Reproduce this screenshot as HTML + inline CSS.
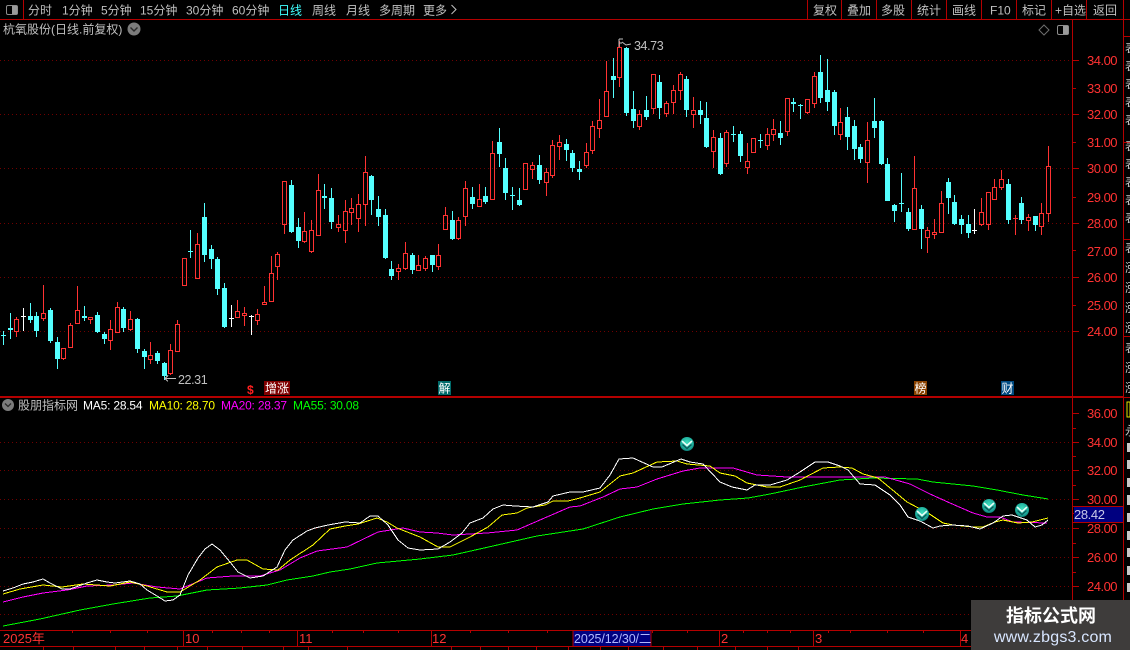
<!DOCTYPE html>
<html lang="zh">
<head>
<meta charset="utf-8">
<title>杭氧股份</title>
<style>
html,body{margin:0;padding:0;background:#000;width:1130px;height:650px;overflow:hidden}
svg{display:block}
text{font-family:"Liberation Sans","WenQuanYi Zen Hei","Noto Sans CJK SC",sans-serif}
.t{font-size:12px;fill:#c0c0c0}
.a{font-size:13px;fill:#ff3232;letter-spacing:-.5px}
.b{font-size:13px;fill:#ff3232}
.m{font-size:12px;letter-spacing:-.2px}
.e{font-size:12px;fill:#fff}
</style>
</head>
<body>
<svg xmlns="http://www.w3.org/2000/svg" width="1130" height="650" viewBox="0 0 1130 650">
<defs>
<radialGradient id="g" cx="50%" cy="40%" r="60%"><stop offset="0" stop-color="#3fe0c0"/><stop offset=".7" stop-color="#1fae9c"/><stop offset="1" stop-color="#0c7f78"/></radialGradient>
<g id="bal"><circle r="7" fill="url(#g)"/><path d="M-4.5 0.5L0 4.5L4.5 0.5" fill="none" stroke="#0b5a5a" stroke-width="1.5"/><path d="M-5 -3L0 1.5L5 -3" fill="none" stroke="#e8fff8" stroke-width="1.6"/></g>
</defs>
<rect width="1130" height="650" fill="#000"/>

<!-- frame lines -->
<g shape-rendering="crispEdges" stroke="#b40000" fill="none">
<path d="M0 19.5H1130M23.5 0V19M807.5 0V19M841.5 0V19M876.5 0V19M911.5 0V19M946.5 0V19M981.5 0V19M1016.5 0V19M1051.5 0V19M1086.5 0V19M1123.5 0V650M1072.5 19V630M0 396.5H1123" stroke-width="1"/>
<path d="M0 397.5H1123M0 630.5H971M0 646.5H971M1123 36.5H1130M1123 142.5H1130M1123 239.5H1130M1123 336.5H1130M1123 397.5H1130" />
<path d="M183.5 630V646M297.5 630V646M431.5 630V646M719.5 630V646M813.5 630V646M960.5 630V646"/>
<path d="M72.5 630V633M110.5 630V633M147.5 630V633M212.5 630V633M241.5 630V633M269.5 630V633M332.5 630V633M363.5 630V633M398.5 630V633M470.5 630V633M508.5 630V633M547.5 630V633M652.5 630V633M687.5 630V633M743.5 630V633M767.5 630V633M790.5 630V633M828.5 630V633M850.5 630V633M887.5 630V633M923.5 630V633"/>
<path d="M43.5 647V650M73.5 647V650M115.5 647V650M144.5 647V650M177.5 647V650M207.5 647V650M242.5 647V650M283.5 647V650M308.5 647V650M347.5 647V650M451.5 647V650M480.5 647V650M508.5 647V650M536.5 647V650M568.5 647V650M600.5 647V650M628.5 647V650M663.5 647V650M697.5 647V650M735.5 647V650M767.5 647V650M798.5 647V650"/>
<path d="M1073 60.5H1079M1073 88.5H1076M1073 114.5H1079M1073 142.5H1076M1073 168.5H1079M1073 197.5H1076M1073 223.5H1079M1073 250.5H1076M1073 277.5H1079M1073 305.5H1076M1073 331.5H1079"/>
<path d="M1073 413.5H1079M1073 428.5H1076M1073 442.5H1079M1073 456.5H1076M1073 470.5H1079M1073 485.5H1076M1073 499.5H1079M1073 513.5H1076M1073 528.5H1079M1073 543.5H1076M1073 557.5H1079M1073 572.5H1076M1073 586.5H1079M1073 601.5H1076"/>
</g>

<!-- dotted grid -->
<path shape-rendering="crispEdges" d="M0 60.5H1072M0 114.5H1072M0 168.5H1072M0 223.5H1072M0 277.5H1072M0 331.5H1072M0 442.5H1072M0 470.5H1072M0 499.5H1072M0 528.5H1072M0 557.5H1072M0 586.5H1072M0 614.5H1072" stroke="#700000" stroke-dasharray="1 3" fill="none"/>

<!-- toolbar -->
<rect x="6.5" y="5.5" width="11" height="9" rx="1.5" fill="none" stroke="#8c8c8c"/><rect x="12" y="6" width="5" height="8" fill="#9a9a9a"/>
<text class="t" x="28" y="14.5">分时</text>
<text class="t" x="62" y="14.5">1分钟</text>
<text class="t" x="101" y="14.5">5分钟</text>
<text class="t" x="140" y="14.5">15分钟</text>
<text class="t" x="186" y="14.5">30分钟</text>
<text class="t" x="232" y="14.5">60分钟</text>
<text class="t" x="278" y="14.5" style="fill:#40ffff">日线</text>
<text class="t" x="312" y="14.5">周线</text>
<text class="t" x="346" y="14.5">月线</text>
<text class="t" x="379" y="14.5">多周期</text>
<text class="t" x="423" y="14.5">更多</text>
<path d="M451.5 5L456 9.5L451.5 14" fill="none" stroke="#c0c0c0"/>
<text class="t" x="813" y="14.5">复权</text>
<text class="t" x="847" y="14.5">叠加</text>
<text class="t" x="881" y="14.5">多股</text>
<text class="t" x="917" y="14.5">统计</text>
<text class="t" x="952" y="14.5">画线</text>
<text class="t" x="990" y="14.5">F10</text>
<text class="t" x="1022" y="14.5">标记</text>
<text class="t" x="1055" y="14.5">+自选</text>
<text class="t" x="1093" y="14.5">返回</text>

<!-- title -->
<text class="t" x="3" y="33.5">杭氧股份(日线.前复权)</text>
<circle cx="134" cy="29" r="6.5" fill="#7c7c7c"/><path d="M130.5 27.5L134 31L137.5 27.5" fill="none" stroke="#2a2a2a" stroke-width="1.4"/>
<path d="M1044 25L1049 30L1044 35L1039 30Z" fill="none" stroke="#6e6e6e"/>
<rect x="1057.5" y="25.5" width="11" height="9" rx="1.5" fill="none" stroke="#8c8c8c"/><rect x="1063" y="26" width="5" height="8" fill="#9a9a9a"/>

<g shape-rendering="crispEdges" fill="none">
<!-- cyan wicks -->
<path stroke="#54ffff" d="M3.5 331V345M1 335.5h5M10.5 313V339M30.5 303V323M36.5 312V337M50.5 308V343M57.5 337V369M84.5 306V321M97.5 312V333M104.5 332V344M123.5 307V332M137.5 318V353M144.5 349V369M157.5 351V364M164.5 362V380M190.5 230V258M188 251.5h5M204.5 203V262M211.5 245V269M217.5 257V295M224.5 283V328M291.5 180V233M298.5 218V248M324.5 184V209M331.5 188V229M371.5 175V215M378.5 196V226M385.5 209V259M391.5 261V280M412.5 253V274M432.5 255V272M452.5 211V240M472.5 187V209M485.5 187V204M499.5 128V167M505.5 158V200M512.5 187V210M510 195.5h5M519.5 188V206M539.5 155V184M566.5 139V161M572.5 150V172M579.5 161V180M613.5 58V98M626.5 47V116M633.5 91V128M646.5 96V120M659.5 75V119M686.5 76V117M700.5 101V124M706.5 102V148M720.5 133V175M733.5 126V142M731 134.5h5M740.5 131V162M760.5 134V148M758 140.5h5M780.5 121V145M793.5 98V112M800.5 104V119M798 105.5h5M820.5 55V103M827.5 59V111M834.5 90V135M847.5 107V150M854.5 120V160M860.5 144V163M874.5 98V138M881.5 120V165M887.5 158V201M894.5 204V222M901.5 173V212M899 203.5h5M908.5 208V231M921.5 205V249M948.5 178V214M954.5 195V225M961.5 215V234M968.5 215V238M1008.5 179V224M1021.5 197V224M1035.5 216V231"/>
<!-- cyan bodies -->
<path fill="#54ffff" d="M8 328h5V330h-5zM28 316h5V320h-5zM34 316h5V331h-5zM48 310h5V341h-5zM55 342h5V359h-5zM82 316h5V318h-5zM95 315h5V332h-5zM102 334h5V339h-5zM121 309h5V328h-5zM135 319h5V349h-5zM142 351h5V357h-5zM155 353h5V361h-5zM162 363h5V376h-5zM202 217h5V255h-5zM209 249h5V259h-5zM215 259h5V289h-5zM222 288h5V327h-5zM289 185h5V232h-5zM296 227h5V241h-5zM322 196h5V198h-5zM329 198h5V222h-5zM369 176h5V200h-5zM376 209h5V217h-5zM383 215h5V258h-5zM389 269h5V276h-5zM410 255h5V270h-5zM430 255h5V265h-5zM450 220h5V239h-5zM470 197h5V204h-5zM483 196h5V202h-5zM497 142h5V154h-5zM503 168h5V193h-5zM517 200h5V205h-5zM537 165h5V180h-5zM564 144h5V150h-5zM570 153h5V168h-5zM577 169h5V172h-5zM611 76h5V80h-5zM624 48h5V113h-5zM631 109h5V121h-5zM644 110h5V117h-5zM657 82h5V108h-5zM684 79h5V110h-5zM698 110h5V115h-5zM704 118h5V147h-5zM718 138h5V174h-5zM738 134h5V156h-5zM778 133h5V138h-5zM791 102h5V104h-5zM818 72h5V98h-5zM825 90h5V102h-5zM832 92h5V126h-5zM845 117h5V137h-5zM852 126h5V149h-5zM858 147h5V159h-5zM872 121h5V128h-5zM879 121h5V164h-5zM885 164h5V201h-5zM892 205h5V211h-5zM906 212h5V229h-5zM919 209h5V229h-5zM946 182h5V198h-5zM952 202h5V224h-5zM959 219h5V225h-5zM966 224h5V233h-5zM1006 184h5V220h-5zM1019 203h5V220h-5zM1033 216h5V225h-5z"/>
<!-- red wicks -->
<path stroke="#ff3232" d="M16.5 317V319M16.5 331V337M43.5 285V313M43.5 318V321M63.5 358V360M70.5 323V325M70.5 347V348M77.5 286V310M77.5 323V324M90.5 319V324M110.5 320V329M110.5 340V350M117.5 302V307M130.5 311V319M130.5 329V331M150.5 342V355M150.5 359V364M170.5 344V350M170.5 373V375M177.5 320V324M197.5 233V244M237.5 300V311M237.5 317V318M244.5 307V313M244.5 315V326M257.5 309V314M257.5 320V325M264.5 286V302M264.5 304V305M271.5 256V273M277.5 252V254M277.5 266V280M284.5 224V234M304.5 212V231M304.5 241V243M311.5 220V230M311.5 251V253M318.5 174V190M318.5 235V236M338.5 215V224M338.5 227V232M345.5 200V211M345.5 230V243M351.5 198V208M351.5 212V225M358.5 194V204M358.5 218V232M365.5 156V172M365.5 204V226M398.5 264V268M398.5 271V280M405.5 242V253M405.5 268V270M418.5 255V265M425.5 256V258M425.5 268V271M438.5 244V255M438.5 266V270M445.5 207V215M445.5 229V230M458.5 217V220M458.5 238V240M465.5 181V188M465.5 216V226M479.5 184V199M492.5 141V153M532.5 162V165M532.5 169V179M546.5 168V172M546.5 182V196M552.5 140V145M552.5 175V178M559.5 135V142M559.5 146V160M586.5 143V152M586.5 165V168M592.5 121V126M592.5 150V154M599.5 99V120M599.5 128V138M606.5 61V91M619.5 41V47M619.5 77V87M639.5 110V114M639.5 126V130M653.5 108V114M666.5 101V103M666.5 113V117M673.5 85V90M673.5 102V114M680.5 72V74M680.5 90V100M693.5 97V110M693.5 114V128M713.5 130V137M713.5 151V168M726.5 130V132M726.5 163V167M747.5 143V161M747.5 167V174M753.5 152V153M767.5 128V134M767.5 145V150M773.5 119V129M773.5 134V141M787.5 131V136M807.5 112V114M814.5 72V76M814.5 103V108M840.5 108V122M840.5 134V140M867.5 122V140M867.5 162V183M914.5 156V188M914.5 229V230M927.5 227V230M927.5 237V253M934.5 219V232M934.5 234V239M941.5 191V203M941.5 232V233M981.5 198V212M981.5 224V226M988.5 224V230M994.5 179V187M994.5 199V200M1001.5 170V179M1001.5 187V190M1015.5 215V235M1028.5 214V217M1028.5 220V231M1041.5 203V213M1041.5 226V235M1048.5 146V166M1048.5 213V222M1013 218.5h5"/>
<!-- red bodies -->
<path stroke="#ff3232" d="M14.5 319.5h4V331.5h-4zM41.5 313.5h4V318.5h-4zM61.5 348.5h4V358.5h-4zM68.5 325.5h4V347.5h-4zM75.5 310.5h4V323.5h-4zM88.5 317.5h4V319.5h-4zM108.5 329.5h4V340.5h-4zM115.5 307.5h4V332.5h-4zM128.5 319.5h4V329.5h-4zM148.5 355.5h4V359.5h-4zM168.5 350.5h4V373.5h-4zM175.5 324.5h4V351.5h-4zM182.5 258.5h4V285.5h-4zM195.5 244.5h4V278.5h-4zM235.5 311.5h4V317.5h-4zM242.5 313.5h4V315.5h-4zM255.5 314.5h4V320.5h-4zM262.5 302.5h4V304.5h-4zM269.5 273.5h4V301.5h-4zM275.5 254.5h4V266.5h-4zM282.5 181.5h4V224.5h-4zM302.5 231.5h4V241.5h-4zM309.5 230.5h4V251.5h-4zM316.5 190.5h4V235.5h-4zM336.5 224.5h4V227.5h-4zM343.5 211.5h4V230.5h-4zM349.5 208.5h4V212.5h-4zM356.5 204.5h4V218.5h-4zM363.5 172.5h4V204.5h-4zM396.5 268.5h4V271.5h-4zM403.5 253.5h4V268.5h-4zM416.5 265.5h4V270.5h-4zM423.5 258.5h4V268.5h-4zM436.5 255.5h4V266.5h-4zM443.5 215.5h4V229.5h-4zM456.5 220.5h4V238.5h-4zM463.5 188.5h4V216.5h-4zM477.5 199.5h4V206.5h-4zM490.5 153.5h4V199.5h-4zM523.5 163.5h4V189.5h-4zM530.5 165.5h4V169.5h-4zM544.5 172.5h4V182.5h-4zM550.5 145.5h4V175.5h-4zM557.5 142.5h4V146.5h-4zM584.5 152.5h4V165.5h-4zM590.5 126.5h4V150.5h-4zM597.5 120.5h4V128.5h-4zM604.5 91.5h4V116.5h-4zM617.5 47.5h4V77.5h-4zM637.5 114.5h4V126.5h-4zM651.5 74.5h4V108.5h-4zM664.5 103.5h4V113.5h-4zM671.5 90.5h4V102.5h-4zM678.5 74.5h4V90.5h-4zM691.5 110.5h4V114.5h-4zM711.5 137.5h4V151.5h-4zM724.5 132.5h4V163.5h-4zM745.5 161.5h4V167.5h-4zM751.5 138.5h4V152.5h-4zM765.5 134.5h4V145.5h-4zM771.5 129.5h4V134.5h-4zM785.5 98.5h4V131.5h-4zM805.5 99.5h4V112.5h-4zM812.5 76.5h4V103.5h-4zM838.5 122.5h4V134.5h-4zM865.5 140.5h4V162.5h-4zM912.5 188.5h4V229.5h-4zM925.5 230.5h4V237.5h-4zM932.5 232.5h4V234.5h-4zM939.5 203.5h4V232.5h-4zM979.5 212.5h4V224.5h-4zM986.5 192.5h4V224.5h-4zM992.5 187.5h4V199.5h-4zM999.5 179.5h4V187.5h-4zM1026.5 217.5h4V220.5h-4zM1039.5 213.5h4V226.5h-4zM1046.5 166.5h4V213.5h-4z"/>
<!-- white doji -->
<path stroke="#fff" d="M23.5 308V331M21 316.5h5M231.5 305V327M229 318.5h5M251.5 315V335M249 316.5h5M974.5 209V234M972 230.5h5"/>
</g>

<!-- hi/lo marks -->
<path d="M176 378.5H165M168 375.5L165 378.5L168 381.5" fill="none" stroke="#c0c0c0" shape-rendering="crispEdges"/>
<text x="178" y="384" style="font-size:12.5px;fill:#c0c0c0;letter-spacing:-.4px">22.31</text>
<path d="M619 39h4M619 39v8M619 43h3M622 42L626 45L631 44" fill="none" stroke="#c0c0c0"/>
<text x="634" y="50" style="font-size:12.5px;fill:#c0c0c0;letter-spacing:-.4px">34.73</text>

<!-- event tags -->
<text x="247" y="394" style="font-size:12px;fill:#ff2020;font-weight:bold">$</text>
<rect x="264" y="381" width="26" height="14" fill="#800000"/><text class="e" x="265" y="392.5">增涨</text>
<rect x="438" y="381" width="13" height="14" fill="#006a6a"/><text class="e" x="438.5" y="392.5">解</text>
<rect x="914" y="381" width="13" height="14" fill="#8a4200"/><text class="e" x="914.5" y="392.5">榜</text>
<rect x="1001" y="381" width="13" height="14" fill="#004a80"/><text class="e" x="1001.5" y="392.5">财</text>

<!-- axis upper -->
<text class="a" x="1087" y="65">34.00</text>
<text class="a" x="1087" y="93">33.00</text>
<text class="a" x="1087" y="119">32.00</text>
<text class="a" x="1087" y="147">31.00</text>
<text class="a" x="1087" y="173">30.00</text>
<text class="a" x="1087" y="202">29.00</text>
<text class="a" x="1087" y="228">28.00</text>
<text class="a" x="1087" y="256">27.00</text>
<text class="a" x="1087" y="282">26.00</text>
<text class="a" x="1087" y="310">25.00</text>
<text class="a" x="1087" y="336">24.00</text>

<!-- axis lower -->
<text class="a" x="1087" y="418">36.00</text>
<text class="a" x="1087" y="447">34.00</text>
<text class="a" x="1087" y="475">32.00</text>
<text class="a" x="1087" y="504">30.00</text>
<text class="a" x="1087" y="533">28.00</text>
<text class="a" x="1087" y="562">26.00</text>
<text class="a" x="1087" y="591">24.00</text>
<rect x="1074" y="507" width="49" height="15" fill="#000080"/>
<path d="M1073 506.5H1123M1073 522.5H1123" stroke="#b40000" shape-rendering="crispEdges"/>
<text x="1074" y="519" style="font-size:13px;fill:#c8c8e8;letter-spacing:-.4px">28.42</text>

<!-- lower header -->
<circle cx="8" cy="405" r="6" fill="#7c7c7c"/><path d="M5 403.5L8 406.5L11 403.5" fill="none" stroke="#2a2a2a" stroke-width="1.3"/>
<text class="t" x="18" y="409.5">股朋指标网</text>
<text class="m" x="83" y="409.5" fill="#fff">MA5: 28.54</text>
<text class="m" x="149" y="409.5" fill="#ffff00">MA10: 28.70</text>
<text class="m" x="221" y="409.5" fill="#ff00ff">MA20: 28.37</text>
<text class="m" x="293" y="409.5" fill="#00ff00">MA55: 30.08</text>

<!-- MA lines -->
<g fill="none" stroke-width="1" shape-rendering="crispEdges">
<polyline stroke="#00ff00" points="3,626 40,619 80,610 113,604 150,598 177,596 207,590 240,588 267,585 287,580 313,576 330,572 350,569 377,563 420,559 453,555 493,546 537,536 583,529 620,517 653,509 683,504 720,500 748,498 770,494 803,487 840,480 873,478 917,479 933,482 973,486 997,490 1023,495 1048,499"/>
<polyline stroke="#ff00ff" points="3,602 23,597 43,593 67,590 87,586 113,585 133,583 157,587 180,589 207,578 233,576 260,576 280,570 300,558 317,551 347,547 378,532 403,528 420,532 437,533 453,535 487,533 517,530 533,523 570,507 580,506 603,497 620,489 637,487 657,479 683,471 700,468 733,468 757,475 787,477 840,477 885,477 910,484 930,494 950,503 973,513 987,517 1000,517 1013,522 1047,523"/>
<polyline stroke="#ffff00" points="3,594 20,589 43,585 62,587 83,584 110,586 130,582 147,586 167,592 180,592 200,580 217,567 237,560 247,560 263,569 278,570 290,560 313,545 330,529 345,526 358,524 377,518 387,522 397,528 420,537 438,547 450,547 470,537 488,527 502,515 517,513 527,508 545,505 553,501 568,501 580,498 600,492 620,476 633,473 657,462 677,461 687,464 710,466 720,473 735,476 747,483 767,487 780,487 800,480 823,468 840,467 852,468 863,474 878,478 895,492 907,502 928,513 943,523 953,525 973,527 983,527 995,522 1003,520 1018,523 1032,522 1048,518"/>
<polyline stroke="#ffffff" points="3,591 13,588 23,584 33,582 43,579 50,583 62,589 70,589 87,583 97,580 107,582 115,583 130,581 140,584 147,590 157,596 165,601 173,600 180,595 188,575 198,558 205,549 212,544 220,550 230,562 238,572 250,578 263,576 277,567 285,550 293,540 307,531 315,528 328,525 345,522 360,523 370,516 378,516 388,525 398,540 408,548 420,550 438,549 450,542 462,533 470,523 483,518 493,509 503,505 515,506 533,507 548,502 553,496 570,492 583,492 600,488 610,475 619,459 633,458 653,467 662,467 681,459 690,462 703,464 720,482 732,487 747,490 755,485 770,485 787,480 800,472 815,462 828,462 840,466 848,470 860,484 875,485 890,495 900,505 908,517 920,521 933,528 940,526 952,525 968,526 980,529 993,523 1003,516 1012,515 1027,520 1035,527 1042,525 1048,520"/>
</g>

<!-- balloons -->
<use href="#bal" x="687" y="444"/>
<use href="#bal" x="922" y="514"/>
<use href="#bal" x="989" y="506"/>
<use href="#bal" x="1022" y="510"/>

<!-- bottom axis -->
<text class="b" x="3" y="643">2025年</text>
<text class="b" x="185" y="643">10</text>
<text class="b" x="299" y="643">11</text>
<text class="b" x="432" y="643">12</text>
<rect x="573" y="631" width="78" height="15" fill="#000080"/>
<path d="M573 631V646M651 631V646" stroke="#b40000" fill="none"/>
<text x="574" y="643" style="font-size:12.5px;fill:#b0b8ff;letter-spacing:-.1px">2025/12/30/二</text>
<text class="b" x="721" y="643">2</text>
<text class="b" x="815" y="643">3</text>
<text class="b" x="961" y="643">4</text>

<!-- right clipped panel -->
<svg x="1124" y="20" width="6" height="580" viewBox="0 0 6 580">
<g style="font-size:12px" fill="#c8c8c8">
<text x="1" y="32">表</text><text x="1" y="50">表</text><text x="1" y="68">表</text><text x="1" y="86">表</text><text x="1" y="104">表</text>
<text x="1" y="130">表</text><text x="1" y="148">表</text><text x="1" y="166">表</text><text x="1" y="184">表</text><text x="1" y="202">表</text>
<text x="1" y="232">表</text><text x="1" y="252">涨</text><text x="1" y="272">涨</text><text x="1" y="292">涨</text><text x="1" y="312">涨</text>
<text x="1" y="332">表</text><text x="1" y="352">涨</text><text x="1" y="372">涨</text>
</g>
<rect x="3" y="382" width="3" height="15" fill="none" stroke="#e0e000"/>
<text x="1" y="415" style="font-size:12px" fill="#c8c8c8">永</text>
<g fill="#c8c8c8"><rect x="3" y="423" width="3" height="9"/><rect x="3" y="440" width="3" height="9"/><rect x="3" y="458" width="3" height="9"/><rect x="3" y="475" width="3" height="10"/><rect x="3" y="493" width="3" height="9"/><rect x="3" y="511" width="3" height="9"/><rect x="3" y="528" width="3" height="9"/><rect x="3" y="546" width="3" height="9"/><rect x="3" y="563" width="3" height="9"/></g>
</svg>

<!-- watermark -->
<rect x="971" y="600" width="159" height="50" fill="#3e3c3b"/>
<text x="1051" y="622" text-anchor="middle" style="font-size:18px;font-weight:bold;fill:#fff">指标公式网</text>
<text x="1053" y="642" text-anchor="middle" style="font-size:16px;fill:#d8e6ff;letter-spacing:.2px">www.zbgs3.com</text>
</svg>
</body>
</html>
